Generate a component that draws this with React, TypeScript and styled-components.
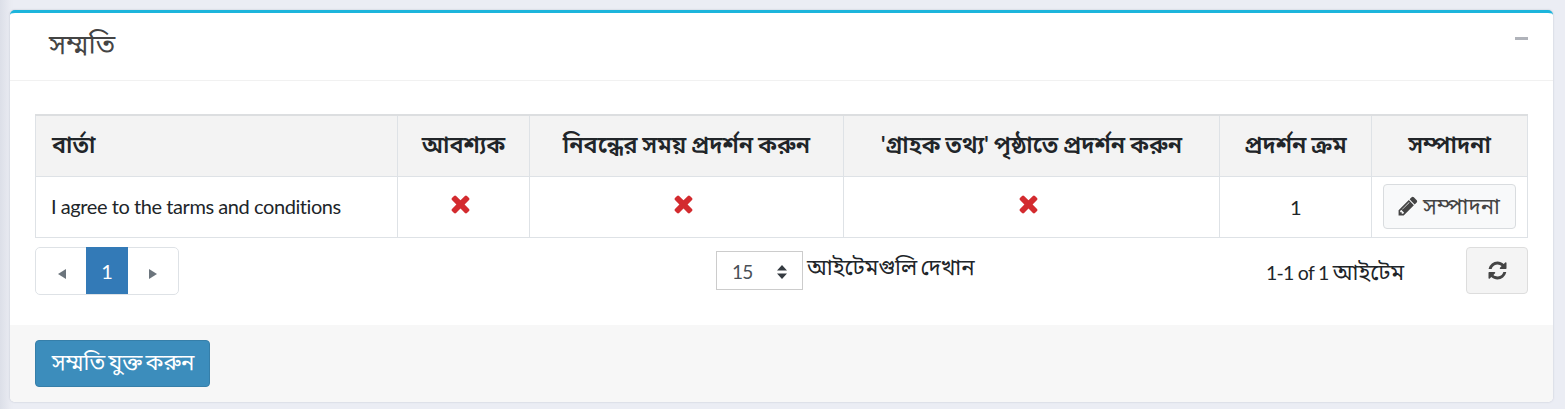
import React from 'react';
import styled, { createGlobalStyle } from 'styled-components';

const GlobalStyle = createGlobalStyle`
  * { box-sizing: border-box; }
  body {
    margin: 0;
    background: #ebedf4;
    color: #212529;
    font: 400 20px/30px Lato, "Noto Sans Bengali", "Noto Sans", sans-serif;
  }
`;

const Page = styled.main`
  height: 409px;
  padding: 10px 12px 0 10px;
  background: linear-gradient(to right, #dcdfe8 0, #e9ebf2 10px, #ebedf4 14px);
  overflow: hidden;
`;

const Card = styled.section`
  display: flex;
  flex-direction: column;
  height: 392px;
  background: #fff;
  border-top: 3px solid #1cb5dc;
  border-radius: 5px;
  box-shadow: 0 0 2px rgba(60, 70, 100, 0.28);
  overflow: hidden;
`;

const CardHeader = styled.header`
  display: flex;
  justify-content: space-between;
  height: 68px;
  padding: 15px 25px 0 39px;
  border-bottom: 1px solid #f1f1f1;
`;

const Title = styled.h3`
  margin: 0;
  font-size: 27.5px;
  font-weight: 400;
  line-height: 32px;
  color: #444;
`;

const Collapse = styled.button`
  width: 13px;
  height: 3px;
  margin-top: 9px;
  padding: 0;
  border: 0;
  background: #b0b3ba;
`;

const CardBody = styled.div`
  flex: 1;
  padding: 33px 0 0 25px;
`;

const Table = styled.table`
  width: 1493px;
  table-layout: fixed;
  border-collapse: collapse;
`;

const HeadCell = styled.th<{ $left?: boolean }>`
  height: 61px;
  padding: 0 0 4px ${(p) => (p.$left ? '16px' : '0')};
  border: 1px solid #dee2e6;
  border-top: 2px solid #dcdee0;
  background: #f3f3f3;
  text-align: ${(p) => (p.$left ? 'left' : 'center')};
  font-weight: 600;
  font-size: 23.4px;
  word-spacing: -1px;
  white-space: nowrap;
`;

const Cell = styled.td<{ $left?: boolean }>`
  height: 61px;
  padding: 0 0 ${(p) => (p.$left ? '1px 15px' : '0 0')};
  border: 1px solid #dee2e6;
  text-align: ${(p) => (p.$left ? 'left' : 'center')};
  letter-spacing: -0.43px;
  white-space: nowrap;
`;

const Bangla = styled.span`
  font-size: 22.2px;
  letter-spacing: 0;
  word-spacing: -2.5px;
`;

const Icon = styled.svg<{ $size: number }>`
  width: ${(p) => p.$size}px;
  height: ${(p) => p.$size}px;
  flex: none;
  fill: currentColor;
`;

const Missing = styled.span`
  display: flex;
  justify-content: center;
  padding: 0 7px 6px 0;
  color: #d32b2f;
`;

const EditButton = styled.button`
  display: inline-flex;
  align-items: center;
  justify-content: center;
  gap: 4px;
  width: 133px;
  height: 45px;
  padding: 0 2px 1px 0;
  border: 1px solid #d9dcdf;
  border-radius: 4px;
  background: #f8f9fa;
  color: #444;
  font: inherit;
  vertical-align: middle;
`;

const Pager = styled.div`
  display: flex;
  align-items: flex-start;
  height: 48px;
  margin-top: 9px;
`;

const Pages = styled.nav`
  display: flex;
  width: 144px;
  height: 48px;
  border: 1px solid #dee2e6;
  border-radius: 5px;
`;

const PageArrow = styled.button<{ $shift: number }>`
  display: flex;
  align-items: center;
  justify-content: center;
  width: 50px;
  padding: 6px 0 0 ${(p) => p.$shift}px;
  border: 0;
  background: transparent;
  color: #6c757d;
`;

const CurrentPage = styled.span`
  width: 42px;
  height: 47px;
  margin-top: -1px;
  line-height: 48px;
  background: #337ab7;
  color: #fff;
  text-align: center;
`;

const SizeSelect = styled.div`
  display: flex;
  align-items: center;
  justify-content: space-between;
  width: 87px;
  height: 39px;
  margin: 4px 4px 0 537px;
  padding: 4px 15px 0 15px;
  border: 1px solid #ccc;
  color: #495057;
  font-size: 19px;
  letter-spacing: -0.8px;
`;

const SizeLabel = styled.span`
  width: 459px;
  line-height: 40px;
  white-space: nowrap;
`;

const Summary = styled.span`
  width: 200px;
  font-size: 19.5px;
  line-height: 50px;
  letter-spacing: -0.75px;
  white-space: nowrap;
`;

const RefreshButton = styled.button`
  display: flex;
  align-items: center;
  justify-content: center;
  width: 62px;
  height: 47px;
  padding: 1px 0 0;
  border: 1px solid #ddd;
  border-radius: 4px;
  background: #f4f4f4;
  color: #444;
`;

const CardFooter = styled.footer`
  height: 77px;
  padding: 15px 25px;
  background: #f7f7f7;
`;

const AddButton = styled.button`
  width: 175px;
  height: 47px;
  padding: 0 0 3px 1px;
  border: 1px solid #367fa9;
  border-radius: 4px;
  background: #3c8dbc;
  color: #fff;
  font: inherit;
  white-space: nowrap;
`;

const TIMES =
  'M1490 1322q0 40-28 68l-136 136q-28 28-68 28t-68-28l-294-294-294 294q-28 28-68 28t-68-28l-136-136q-28-28-28-68t28-68l294-294-294-294q-28-28-28-68t28-68l136-136q28-28 68-28t68 28l294 294 294-294q28-28 68-28t68 28l136 136q28 28 28 68t-28 68l-294 294 294 294q28 28 28 68z';
const PENCIL =
  'M491 1536l91-91-235-235-91 91v107h128v128h107zm523-928q0-22-22-22-10 0-17 7l-542 542q-7 7-7 17 0 22 22 22 10 0 17-7l542-542q7-7 7-17zm-54-192l416 416-832 832h-416v-416zm683 96q0 53-37 90l-166 166-416-416 166-165q36-38 90-38 53 0 91 38l235 234q37 39 37 91z';
const REFRESH =
  'M1639 1056q0 5-1 7-64 268-268 434.5t-478 166.5q-146 0-282.5-55t-243.5-157l-129 129q-19 19-45 19t-45-19-19-45v-448q0-26 19-45t45-19h448q26 0 45 19t19 45-19 45l-137 137q71 66 161 102t187 36q134 0 250-65t186-179q11-17 53-117 8-23 30-23h192q13 0 22.5 9.5t9.5 22.5zm25-800v448q0 26-19 45t-45 19h-448q-26 0-45-19t-19-45 19-45l138-138q-148-137-349-137-134 0-250 65t-186 179q-11 17-53 117-8 23-30 23h-199q-13 0-22.5-9.5t-9.5-22.5v-7q65-268 270-434.5t480-166.5q146 0 284 55.5t245 156.5l130-129q19-19 45-19t45 19 19 45z';

const Glyph = ({ d, size }: { d: string; size: number }) => (
  <Icon $size={size} viewBox="0 0 1792 1792" aria-hidden="true">
    <path d={d} />
  </Icon>
);

const columns = [
  { label: 'বার্তা', width: 362 },
  { label: 'আবশ্যক', width: 132 },
  { label: 'নিবন্ধের সময় প্রদর্শন করুন', width: 314 },
  { label: "'গ্রাহক তথ্য' পৃষ্ঠাতে প্রদর্শন করুন", width: 376 },
  { label: 'প্রদর্শন ক্রম', width: 152 },
  { label: 'সম্পাদনা', width: 156 },
];

export default function App() {
  return (
    <>
      <GlobalStyle />
      <Page>
        <Card>
          <CardHeader>
            <Title>সম্মতি</Title>
            <Collapse aria-label="Collapse" />
          </CardHeader>
          <CardBody>
            <Table>
              <colgroup>
                {columns.map((c) => (
                  <col key={c.label} width={c.width} />
                ))}
              </colgroup>
              <thead>
                <tr>
                  {columns.map((c, i) => (
                    <HeadCell key={c.label} $left={i === 0}>
                      {c.label}
                    </HeadCell>
                  ))}
                </tr>
              </thead>
              <tbody>
                <tr>
                  <Cell $left>I agree to the tarms and conditions</Cell>
                  {[0, 1, 2].map((n) => (
                    <Cell key={n}>
                      <Missing>
                        <Glyph d={TIMES} size={27} />
                      </Missing>
                    </Cell>
                  ))}
                  <Cell>1</Cell>
                  <Cell>
                    <EditButton>
                      <Glyph d={PENCIL} size={22} />
                      <Bangla>সম্পাদনা</Bangla>
                    </EditButton>
                  </Cell>
                </tr>
              </tbody>
            </Table>
            <Pager>
              <Pages>
                <PageArrow $shift={2} aria-label="Previous">
                  <svg width="8" height="10" viewBox="0 0 8 10">
                    <path d="M8 0v10L0 5z" fill="currentColor" />
                  </svg>
                </PageArrow>
                <CurrentPage>1</CurrentPage>
                <PageArrow $shift={0} aria-label="Next">
                  <svg width="8" height="10" viewBox="0 0 8 10">
                    <path d="M0 0v10l8-5z" fill="currentColor" />
                  </svg>
                </PageArrow>
              </Pages>
              <SizeSelect>
                15
                <svg width="10" height="14" viewBox="0 0 10 14">
                  <path d="M0 5.5L5 0l5 5.5zM0 8.5h10L5 14z" fill="#343a40" />
                </svg>
              </SizeSelect>
              <SizeLabel>
                <Bangla>আইটেমগুলি দেখান</Bangla>
              </SizeLabel>
              <Summary>
                1-1 of 1 <Bangla>আইটেম</Bangla>
              </Summary>
              <RefreshButton aria-label="Refresh">
                <Glyph d={REFRESH} size={21} />
              </RefreshButton>
            </Pager>
          </CardBody>
          <CardFooter>
            <AddButton>
              <Bangla>সম্মতি যুক্ত করুন</Bangla>
            </AddButton>
          </CardFooter>
        </Card>
      </Page>
    </>
  );
}
